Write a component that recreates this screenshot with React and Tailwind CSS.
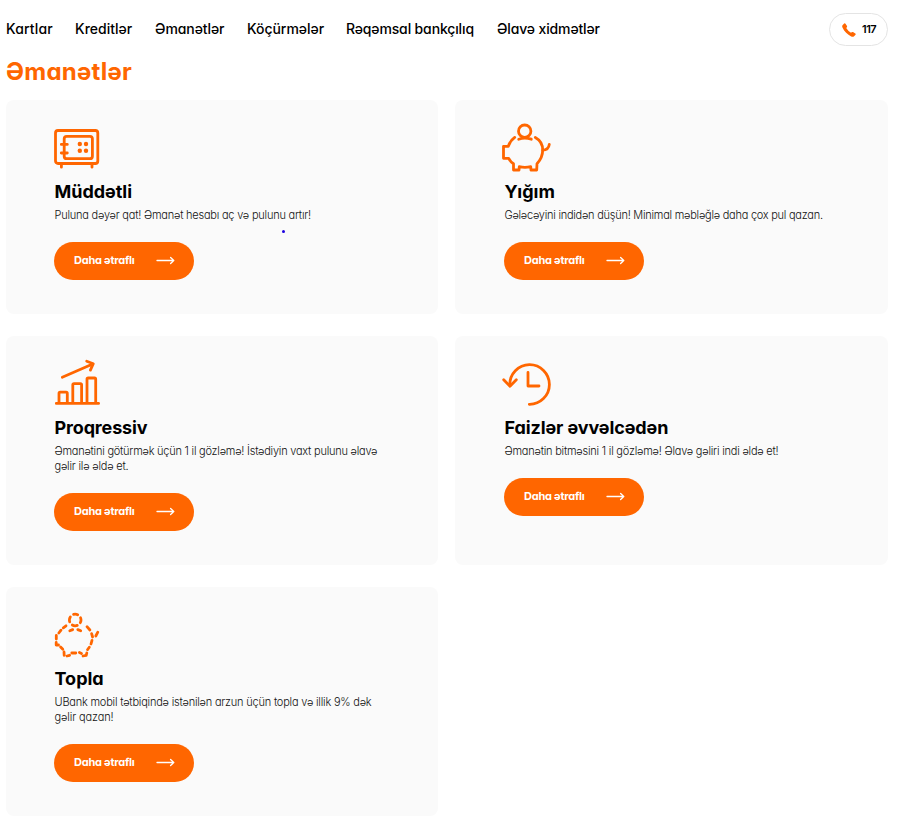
import React from "react";

const nav = [
  { label: "Kartlar", cls: "w-[69px] tracking-[0.14px]" },
  { label: "Kreditlər", cls: "w-[80px]" },
  { label: "Əmanətlər", cls: "w-[92px] tracking-[-0.08px]" },
  { label: "Köçürmələr", cls: "w-[99px] tracking-[-0.04px]" },
  { label: "Rəqəmsal bankçılıq", cls: "w-[151px] tracking-[-0.14px]" },
  { label: "Əlavə xidmətlər", cls: "w-[110px] tracking-[-0.14px]" },
];

function Icon({ children, width = 2.8 }) {
  return (
    <svg
      className="block h-12 w-12 overflow-visible"
      viewBox="0 0 48 48"
      fill="none"
      stroke="#ff6600"
      strokeWidth={width}
      strokeLinecap="round"
      strokeLinejoin="round"
    >
      {children}
    </svg>
  );
}

const Safe = () => (
  <Icon>
    <rect x="1.5" y="6.5" width="42.3" height="33" rx="2.5" />
    <rect x="10.2" y="12.3" width="28.2" height="22.4" rx="2.5" />
    <path d="M7.3 20.4h6M7.3 29h6M7.4 40v3.2M38 40v3.2" />
    <g fill="#ff6600" stroke="none">
      <circle cx="25.8" cy="20" r="2.2" />
      <circle cx="32" cy="20" r="2.2" />
      <circle cx="25.8" cy="26.7" r="2.2" />
      <circle cx="32" cy="26.7" r="2.2" />
    </g>
  </Icon>
);

const Piggy = () => (
  <Icon>
    <circle cx="20.7" cy="7.2" r="6.2" />
    <path d="M14.7 15.2Q20.7 13 27.3 15.2" />
    <path d="M10.7 13.4Q6.2 16.5 4.3 22.3H-.5V34.3H4.7Q6.5 37.8 9.5 39.7V46H15L15.3 42.7Q21 43.9 26.7 42.7L27 46H32.7L33 39.7C36 36.5 38.7 31.5 38.7 26C38.7 20.5 35.7 15.8 31.3 13.4" />
    <path d="M38.7 26.2Q44.6 26 45.3 20.4" />
  </Icon>
);

const Growth = () => (
  <Icon>
    <path d="M2.3 43.4H44.6M5 43V33.4Q5 32.2 6.2 32.2H12.1Q13.3 32.2 13.3 33.4V43M18.8 43V24.8Q18.8 23.6 20 23.6H26.4Q27.6 23.6 27.6 24.8V43M33 43V19.2Q33 18 34.2 18H40.5Q41.7 18 41.7 19.2V43" />
    <path d="M8.3 17.3L38.7 4M32.7 1.3L39.3 3.7L36.4 10.1" />
  </Icon>
);

const History = () => (
  <Icon>
    <path d="M25.3 44.3A19.8 19.8 0 1 0 5.8 25" />
    <path d="M-.3 19.8L6 26.2L12.3 19.8M24 12.4V26H35" />
  </Icon>
);

const DashedPiggy = () => (
  <Icon width={2.8}>
    <circle cx="21.2" cy="9" r="5.8" strokeDasharray="5.2 3.9" strokeDashoffset="2.6" transform="rotate(-90 21.2 9)" />
    <path d="M15.8 19.8L18.7 18.6M23.8 18.6L26.7 19.8" />
    <path d="M12 14.8L9.3 16.8M7 19.2L4.8 22M2.3 24.4V28M2.2 31.5V34H4.5M6.6 36L8.8 38.2M10 41L10.2 44.3M13 45L15.6 44.3M17.8 42L21.8 42M25.4 41.5L27.5 42.5M29 45L32.2 44.3L32.8 42M33.5 38.7L35.3 36.2M37 33L38 29.4M38.6 26L37.6 22.7M35.9 19L33 15.7M41.8 25L43.8 21.2" />
  </Icon>
);

const cards = [
  {
    icon: Safe,
    title: "Müddətli",
    titleCls: "tracking-[-0.04px]",
    lines: [["Puluna dəyər qat! Əmanət hesabı aç və pulunu artır!", "tracking-[-0.22px]"]],
  },
  {
    icon: Piggy,
    title: "Yığım",
    titleCls: "tracking-[0px]",
    lines: [["Gələcəyini indidən düşün! Minimal məbləğlə daha çox pul qazan.", "tracking-[-0.25px]"]],
  },
  {
    icon: Growth,
    title: "Proqressiv",
    titleCls: "tracking-[-0.15px]",
    lines: [
      ["Əmanətini götürmək üçün 1 il gözləmə! İstədiyin vaxt pulunu əlavə", "tracking-[-0.235px]"],
      ["gəlir ilə əldə et.", "tracking-[-0.2px]"],
    ],
  },
  {
    icon: History,
    title: "Faizlər əvvəlcədən",
    titleCls: "tracking-[-0.1px]",
    lines: [["Əmanətin bitməsini 1 il gözləmə! Əlavə gəliri indi əldə et!", "tracking-[-0.22px]"]],
  },
  {
    icon: DashedPiggy,
    title: "Topla",
    titleCls: "tracking-[0px]",
    lines: [
      ["UBank mobil tətbiqində istənilən arzun üçün topla və illik 9% dək", "tracking-[-0.21px]"],
      ["gəlir qazan!", "tracking-[-0.12px]"],
    ],
  },
];

function Card({ icon: Glyph, title, titleCls, lines, dot, inset }) {
  return (
    <section className={"relative rounded-lg bg-[#fafafa] pt-6 pb-[34px] " + inset}>
      <Glyph />
      <h2 className={"mt-2 h-6 pl-[0.5px] text-[18px] leading-6 font-bold whitespace-nowrap text-black " + titleCls}>{title}</h2>
      <div className="mt-1 pl-[0.5px] text-[11px] leading-[15px] font-light text-[#111]">
        {lines.map(([text, cls]) => (
          <p key={text} className={"whitespace-nowrap " + cls}>{text}</p>
        ))}
      </div>
      <button className="mt-[19px] flex h-[38px] w-[140px] items-center justify-between rounded-full bg-[#ff6600] pr-[19px] pb-px pl-5 text-[11px] font-bold text-white">
        <span className="whitespace-nowrap tracking-[-0.23px]">Daha ətraflı</span>
        <svg className="h-[9px] w-[19px]" viewBox="0 0 19 9" fill="none" stroke="white" strokeWidth="1.3" strokeLinecap="round" strokeLinejoin="round">
          <path d="M1 4.5H17.8M14.6 1.5L17.8 4.5L14.6 7.5" />
        </svg>
      </button>
      {dot && <span className="absolute top-[130px] left-[276px] size-[3px] rounded-full bg-[#1c00e0]" />}
    </section>
  );
}

export default function App() {
  return (
    <main className="h-[833px] w-[897px] overflow-hidden bg-white pl-1.5 font-['Inter','Noto_Sans',sans-serif] [font-feature-settings:'cv11']">
      <header className="flex h-[59px] items-center justify-between pr-[9px]">
        <nav className="flex pb-[2px] text-[14px] leading-5 font-medium text-black">
          {nav.map(({ label, cls }) => (
            <a key={label} className={"whitespace-nowrap " + cls}>{label}</a>
          ))}
        </nav>
        <a className="flex h-[33px] w-[59px] items-center rounded-full border border-[#e4e4e4] pl-[12px] text-[11px] font-semibold text-black">
          <svg className="size-[14px] shrink-0" viewBox="0 0 14 14" fill="#ff6600">
            <path d="M.5 2.2L2.2.5Q2.9 0 3.5.7L5 3Q5.3 3.8 4.7 4.4L4.2 5Q6 8 9 9.8L9.6 9.3Q10.2 8.7 11 9L13.3 10.5Q14 11.1 13.5 11.8L11.8 13.5Q10.8 14.2 9.2 13.4C5.5 11.7 2.3 8.5.6 4.8Q-.2 3.2.5 2.2Z" />
          </svg>
          <span className="ml-[6px] tracking-[-0.5px]">117</span>
        </a>
      </header>
      <h1 className="mb-[15px] h-[26px] text-[24px] leading-[26px] font-bold whitespace-nowrap text-[#ff6600]">
        <span className="tracking-[0.25px]">Əmanətlər</span>
      </h1>
      <div className="grid grid-cols-[432px_433px] grid-rows-[214px_229px_229px] gap-x-[17px] gap-y-[22px]">
        {cards.map((card, i) => (
          <Card key={card.title} {...card} dot={i === 0} inset={i % 2 ? "pl-[49px]" : "pl-12"} />
        ))}
      </div>
    </main>
  );
}
